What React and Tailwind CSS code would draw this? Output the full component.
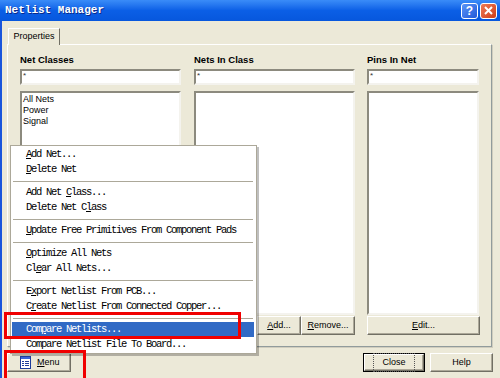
import React from 'react'

const menuItems = [
  { label: 'Add Net...', u: 0 },
  { label: 'Delete Net', u: 0 },
  { sep: true },
  { label: 'Add Net Class...', u: 8 },
  { label: 'Delete Net Class', u: 12 },
  { sep: true },
  { label: 'Update Free Primitives From Component Pads', u: 0 },
  { sep: true },
  { label: 'Optimize All Nets', u: 0 },
  { label: 'Clear All Nets...', u: 2 },
  { sep: true },
  { label: 'Export Netlist From PCB...', u: 1 },
  { label: 'Create Netlist From Connected Copper...', u: 1 },
  { sep: true },
  { label: 'Compare Netlists...', u: 3, active: true },
  { label: 'Compare Netlist File To Board...', u: -1 },
]

function Accel({ text, u }) {
  if (u < 0) return text
  return (
    <>
      {text.slice(0, u)}
      <span className="underline underline-offset-[1px]">{text[u]}</span>
      {text.slice(u + 1)}
    </>
  )
}

function Btn({ children, className = '' }) {
  return (
    <div className={`h-[19px] flex items-center justify-center bg-[#ECE9D8] border border-t-white border-l-white border-r-[#716F64] border-b-[#716F64] shadow-[inset_-1px_-1px_0_#ACA899] text-[9px] text-black ${className}`}>
      {children}
    </div>
  )
}

function Filter() {
  return (
    <div className="h-[16px] bg-white border-2 border-t-[#8c8a7e] border-l-[#8c8a7e] border-r-[#f4f3ee] border-b-[#f4f3ee] pl-[1px] text-[8px] leading-[10px] text-[#333]">
      *
    </div>
  )
}

function ListBox({ items = [] }) {
  return (
    <div className="mt-[6px] h-[224px] bg-white border-2 border-t-[#8c8a7e] border-l-[#8c8a7e] border-r-[#f4f3ee] border-b-[#f4f3ee] pt-[1px] text-[9px] leading-[11px] text-black">
      {items.map(t => (
        <div key={t} className="pl-[1px]">{t}</div>
      ))}
    </div>
  )
}

function MenuIcon() {
  return (
    <svg width="11" height="13" viewBox="0 0 11 13">
      <rect x="0.5" y="0.5" width="10" height="12" fill="#fff" stroke="#1e3c9a" />
      <rect x="1" y="1" width="9" height="2" fill="#3a64d8" />
      <rect x="2" y="5" width="2" height="1" fill="#1e3c9a" />
      <rect x="5" y="5" width="4" height="1" fill="#1e3c9a" />
      <rect x="2" y="7" width="2" height="1" fill="#1e3c9a" />
      <rect x="5" y="7" width="4" height="1" fill="#1e3c9a" />
      <rect x="2" y="9" width="2" height="1" fill="#1e3c9a" />
      <rect x="5" y="9" width="4" height="1" fill="#1e3c9a" />
    </svg>
  )
}

export default function App() {
  return (
    <div className="w-[500px] h-[378px] relative overflow-hidden bg-[#ECE9D8] font-['Liberation_Sans',Arial,sans-serif] select-none">
      {/* Title bar */}
      <div className="h-[21px] bg-linear-to-b from-[#3a8cf8] via-[#0b5fe6] to-[#0757dd] flex items-center pl-[5px] pr-[3px]">
        <span className="font-['Liberation_Mono',monospace] font-bold text-[11px] text-white [text-shadow:1px_1px_0_#0a2a8a]">
          Netlist Manager
        </span>
        <div className="ml-auto flex gap-[2px]">
          <div className="w-[17px] h-[16px] rounded-[3px] border border-white bg-linear-to-br from-[#5b95f7] to-[#2358d8] flex items-center justify-center text-white font-bold text-[12px] leading-none">
            ?
          </div>
          <div className="w-[17px] h-[16px] rounded-[3px] border border-white bg-linear-to-br from-[#ee7a55] to-[#cf3c14] flex items-center justify-center">
            <svg width="9" height="9" viewBox="0 0 9 9">
              <path d="M1 1 L8 8 M8 1 L1 8" stroke="#fff" strokeWidth="2" />
            </svg>
          </div>
        </div>
      </div>

      <div className="flex">
        <div className="w-[3px] self-stretch bg-[#1a55dc] h-[357px]" />
        <div className="flex-1 pl-[5px] pr-[8px]">
          {/* Tab */}
          <div className="pt-[6px] pl-[1px] flex">
            <div className="w-[52px] h-[17px] bg-[#ECE9D8] border border-b-0 border-t-white border-l-white border-r-[#716F64] text-[9px] text-black flex items-center justify-center relative top-[1px]">
              Properties
            </div>
          </div>

          {/* Panel */}
          <div className="h-[303px] border border-t-white border-l-white border-r-[#919b9c] border-b-[#919b9c] shadow-[1px_1px_0_#d0cdbe] pt-[9px] px-[12px] flex gap-[13px]">
            <div className="w-[161px]">
              <div className="h-[12px] leading-[12px] mb-[3px] text-[9.5px] font-bold text-black">Net Classes</div>
              <Filter />
              <ListBox items={['All Nets', 'Power', 'Signal']} />
            </div>
            <div className="w-[161px]">
              <div className="h-[12px] leading-[12px] mb-[3px] text-[9.5px] font-bold text-black">Nets In Class</div>
              <Filter />
              <ListBox />
              <div className="mt-[1px] flex justify-end">
                <Btn className="w-[44px]"><Accel text="Add..." u={0} /></Btn>
                <Btn className="w-[54px]"><Accel text="Remove..." u={0} /></Btn>
              </div>
            </div>
            <div className="w-[112px] -ml-[1px]">
              <div className="h-[12px] leading-[12px] mb-[3px] text-[9.5px] font-bold text-black">Pins In Net</div>
              <Filter />
              <ListBox />
              <div className="mt-[1px]">
                <Btn className="w-[113px]"><Accel text="Edit..." u={0} /></Btn>
              </div>
            </div>
          </div>

          {/* Bottom buttons */}
          <div className="mt-[6px] flex items-center">
            <Btn className="w-[64px] gap-[6px] justify-start pl-[12px]">
              <MenuIcon />
              <span><Accel text="Menu" u={0} /></span>
            </Btn>
            <div className="ml-auto flex gap-[5px] -mr-[1px]">
              <div className="w-[62px] h-[19px] border border-black">
                <Btn className="h-[17px]! w-full">
                  <span className="px-[6px] outline-1 outline-dotted outline-[#555] outline-offset-[2px]">Close</span>
                </Btn>
              </div>
              <Btn className="w-[63px]">Help</Btn>
            </div>
          </div>
        </div>
      </div>

      {/* Popup menu */}
      <div className="absolute left-[10px] top-[145px] w-[247px] bg-white border border-[#ACA899] shadow-[2px_2px_0_rgba(0,0,0,0.25)] py-[1px] pl-[1px] pr-[2px] font-['Liberation_Mono',monospace] text-[10.5px] tracking-[-1.3px] text-black">
        {menuItems.map((m, i) =>
          m.sep ? (
            <div key={i} className="h-[8px] flex items-center px-[1px]">
              <div className="h-px w-full bg-[#ACA899]" />
            </div>
          ) : (
            <div
              key={i}
              className={`h-[15px] leading-[15px] pl-[14px] whitespace-nowrap ${m.active ? 'bg-[#316AC5] text-white' : ''}`}
            >
              <Accel text={m.label} u={m.u} />
            </div>
          )
        )}
      </div>

      {/* Red highlight boxes */}
      <div className="absolute left-[4px] top-[312px] w-[237px] h-[27px] border-[3px] border-[#f00000]" />
      <div className="absolute left-[4px] top-[350px] w-[82px] h-[40px] border-[3px] border-[#f00000]" />
    </div>
  )
}
